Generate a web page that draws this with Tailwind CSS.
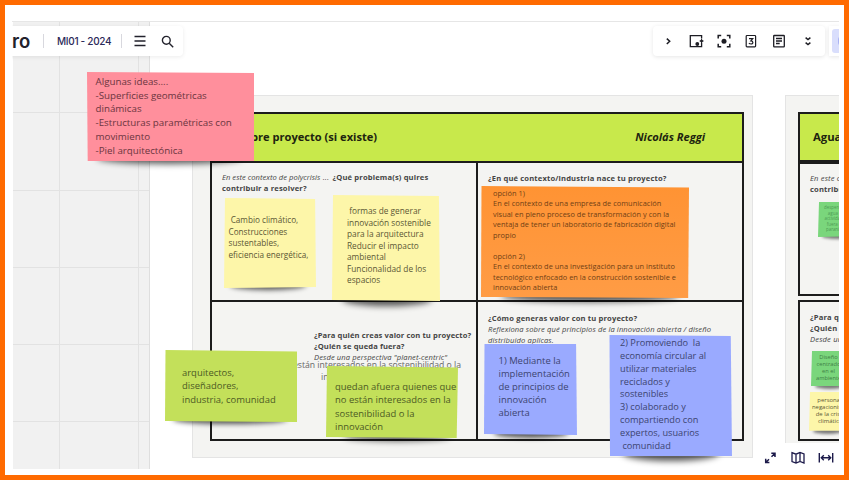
<!DOCTYPE html>
<html lang="es">
<head>
<meta charset="utf-8">
<title>MI01 - 2024</title>
<script src="https://cdn.jsdelivr.net/npm/@tailwindcss/browser@4"></script>
</head>
<body class="bg-[#ff6a00] font-['Open_Sans',sans-serif]">
<main class="relative h-[480px] w-[849px] overflow-hidden border-5 border-[#ff6a00] bg-white">
<div class="absolute -left-[5px] -top-[5px] h-[480px] w-[849px] [clip-path:inset(21px_10px_11px_12px)]">

  <!-- grid panel -->
  <div class="absolute left-[13px] top-[21px] flex h-[448px] w-[137px] border-r border-[#dedede] bg-[#f1f1f1]">
    <div class="w-[47px] border-r border-[#e2e2e2]"></div>
    <div class="w-[79px] border-r border-[#e2e2e2]"></div>
    <div class="absolute inset-x-0 top-[15px] flex flex-col">
      <div class="h-[77.3px] border-b border-[#e2e2e2]"></div>
      <div class="h-[77.3px] border-b border-[#e2e2e2]"></div>
      <div class="h-[77.3px] border-b border-[#e2e2e2]"></div>
      <div class="h-[77.3px] border-b border-[#e2e2e2]"></div>
      <div class="h-[77.3px] border-b border-[#e2e2e2]"></div>
    </div>
  </div>
  <div class="absolute left-[12px] top-[21px] h-px w-[827px] bg-[#e6e6e6]"></div>

  <!-- frame 1 -->
  <section class="absolute left-[192px] top-[95px] h-[363px] w-[561px] border border-[#e4e4e4] bg-[#f4f4f2] pl-[17px] pt-[16px] text-[#444]">
    <div class="grid h-[329px] w-[534px] grid-cols-[266px_1fr] grid-rows-[49px_139px_1fr] border-2 border-[#1c1c1c]">
      <header class="col-span-2 flex items-center justify-between border-b-2 border-[#1c1c1c] bg-[#c8e94b] pl-[26px] pr-[37px] text-[11.1px] font-bold text-[#20240f]">
        <span class="whitespace-pre">Sobre proyecto (si existe)</span><span class="italic">Nicolás Reggi</span>
      </header>
      <div class="border-b-2 border-r-2 border-[#1c1c1c] pl-[10px] pt-[9px] text-[7.6px] leading-[11px] tracking-[0.15px]">
        <p class="whitespace-pre"><i class="tracking-[0.03px]">En este contexto de polycrisis</i> ... <b class="ml-[1.5px]">¿Qué problema(s) quires</b></p>
        <p class="font-bold">contribuir a resolver?</p>
      </div>
      <div class="border-b-2 border-[#1c1c1c] pl-[10px] pt-[10px] text-[7.6px] font-bold leading-[11px] tracking-[0.15px]">¿En qué contexto/industria nace tu proyecto?</div>
      <div class="border-r-2 border-[#1c1c1c] pl-[102px] pt-[28px] text-[7.6px] leading-[11px] tracking-[0.1px]">
        <p class="whitespace-nowrap font-bold">¿Para quién creas valor con tu proyecto?</p>
        <p class="font-bold">¿Quién se queda fuera?</p>
        <p class="italic">Desde una perspectiva "planet-centric"</p>
      </div>
      <div class="pl-[10px] pt-[11px] text-[7.6px] leading-[11px] tracking-[0.1px]">
        <p class="font-bold tracking-[0.15px]">¿Cómo generas valor con tu proyecto?</p>
        <p class="whitespace-nowrap italic">Reflexiona sobre qué principios de la innovación abierta / diseño</p>
        <p class="italic">distribuido aplicas.</p>
      </div>
    </div>
  </section>

  <!-- frame 2 -->
  <section class="absolute left-[785px] top-[95px] h-[363px] w-[561px] border border-[#e4e4e4] bg-[#f4f4f2] pl-[12px] pt-[16px] text-[#444]">
    <div class="flex h-[50px] w-[534px] items-center border-2 border-[#1c1c1c] bg-[#c8e94b] pl-[13px] text-[11.3px] font-bold text-[#20240f]">Agua</div>
    <div class="h-[134px] w-[534px] border-2 border-[#1c1c1c] pl-[10px] pt-[9px] text-[7.6px] leading-[11px] tracking-[0.15px]">
      <p class="italic">En este contexto</p><p class="font-bold">contribuir a</p>
    </div>
    <div class="mt-[4px] h-[141px] w-[534px] border-2 border-[#1c1c1c] pl-[10px] pt-[10px] text-[7.6px] leading-[11px] tracking-[0.15px]">
      <p class="font-bold">¿Para quién</p><p class="font-bold">¿Quién se</p><p class="italic">Desde una</p>
    </div>
  </section>

  <!-- loose text behind the green note -->
  <div class="absolute left-[293px] top-[359px] whitespace-pre text-[8.65px] leading-[12px] text-[#666]"><p>están interesados en la sostenibilidad o la</p><p class="pl-[28px]">innovación</p></div>

  <!-- pink -->
  <article class="absolute left-[87px] top-[72px] h-[89px] w-[167px]">
    <div class="absolute bottom-[-3px] left-[10px] h-[12px] w-[145px] rounded-[50%] bg-black/65 blur-[3px]"></div>
    <div class="absolute inset-0 bg-[#ff8f9c] [clip-path:polygon(0_0,100%_1px,100%_100%,0.7px_100%)]"></div>
    <p class="relative whitespace-pre pl-[8.5px] pt-[3px] text-[9.75px] leading-[13.7px] text-[#6b3540]">Algunas ideas....
-Superficies geométricas
dinámicas
-Estructuras paramétricas con
movimiento
-Piel arquitectónica</p>
  </article>

  <!-- yellow -->
  <article class="absolute left-[224px] top-[198px] h-[90px] w-[92px]">
    <div class="absolute bottom-[-2px] left-[6px] h-[10px] w-[76px] rounded-[50%] bg-black/65 blur-[2.5px]"></div>
    <div class="absolute inset-0 bg-[#fdf6a9] [clip-path:polygon(1px_0,99%_1px,100%_99%,0_100%)]"></div>
    <p class="relative whitespace-pre pl-[4.5px] pt-[16px] text-[8.2px] leading-[11.7px] text-[#5b5635]"> Cambio climático,
Construcciones
sustentables,
eficiencia energética,</p>
  </article>
  <article class="absolute left-[332px] top-[195px] h-[106px] w-[108px]">
    <div class="absolute bottom-[-5px] left-[10px] h-[14px] w-[90px] rounded-[50%] bg-black/65 blur-[3px]"></div>
    <div class="absolute inset-0 bg-[#fdf6a9] [clip-path:polygon(1px_0,99%_1px,100%_100%,0_99%)]"></div>
    <p class="relative whitespace-pre pl-[15px] pt-[10px] text-[8.3px] leading-[11.5px] text-[#5b5635]"> formas de generar
innovación sostenible
para la arquitectura
Reducir el impacto
ambiental
Funcionalidad de los
espacios</p>
  </article>

  <!-- orange -->
  <article class="absolute left-[481px] top-[186px] h-[112px] w-[208px]">
    <div class="absolute bottom-[-4px] left-[20px] h-[12px] w-[178px] rounded-[50%] bg-black/65 blur-[3px]"></div>
    <div class="absolute inset-0 bg-linear-to-b from-[#ff9333] to-[#ff9c45] [clip-path:polygon(0.5px_0,100%_1.5px,99.6%_100%,0_99%)]"></div>
    <p class="relative whitespace-pre pl-[12px] pt-[2px] text-[7.4px] leading-[10.45px] tracking-[0.03px] text-[#703f15]">opción 1)
En el contexto de una empresa de comunicación
visual en pleno proceso de transformación y con la
ventaja de tener un laboratorio de fabricación digital
propio

opción 2)
En el contexto de una investigación para un instituto
tecnológico enfocado en la construcción sostenible e
innovación abierta</p>
  </article>

  <!-- lime -->
  <article class="absolute left-[165px] top-[350px] h-[72px] w-[132px]">
    <div class="absolute bottom-[-2px] left-[8px] h-[9px] w-[114px] rounded-[50%] bg-black/65 blur-[2.5px]"></div>
    <div class="absolute inset-0 bg-[#c3e05a] [clip-path:polygon(0.5px_0,100%_1.5px,100%_100%,0_98.5%)]"></div>
    <p class="relative whitespace-pre pl-[17px] pt-[16px] text-[9.45px] leading-[13.3px] text-[#4c5a24]">arquitectos,
diseñadores,
industria, comunidad</p>
  </article>
  <article class="absolute left-[326px] top-[366px] h-[72px] w-[132px]">
    <div class="absolute bottom-[-3px] left-[18px] h-[10px] w-[106px] rounded-[50%] bg-black/65 blur-[3px]"></div>
    <div class="absolute inset-0 bg-[#c3e05a] [clip-path:polygon(1px_0,100%_1.5px,99%_100%,0_98.5%)]"></div>
    <p class="relative whitespace-pre pl-[9px] pt-[14px] text-[9.45px] leading-[13.3px] text-[#4c5a24]">quedan afuera quienes que
no están interesados en la
sostenibilidad o la
innovación</p>
  </article>

  <!-- blue -->
  <article class="absolute left-[484px] top-[344px] h-[91px] w-[93px]">
    <div class="absolute bottom-[-3px] left-[10px] h-[10px] w-[74px] rounded-[50%] bg-black/65 blur-[2.5px]"></div>
    <div class="absolute inset-0 bg-[#9aaaff] [clip-path:polygon(0.5px_0,99%_0,100%_100%,0_99%)]"></div>
    <p class="relative whitespace-pre pl-[14.5px] pt-[10px] text-[9.45px] leading-[13.1px] text-[#3c4470]">1) Mediante la
implementación
de principios de
innovación
abierta</p>
  </article>
  <article class="absolute left-[609px] top-[335px] h-[121px] w-[123px]">
    <div class="absolute bottom-[-5px] left-[14px] h-[15px] w-[96px] rounded-[50%] bg-black/65 blur-[3px]"></div>
    <div class="absolute inset-0 bg-[#9aaaff] [clip-path:polygon(0.5px_0,99%_1px,100%_100%,1px_100%)]"></div>
    <p class="relative whitespace-pre pl-[11px] pt-[2px] text-[9.2px] leading-[12.85px] text-[#3c4470]">2) Promoviendo  la
economía circular al
utilizar materiales
reciclados y
sostenibles
3) colaborado y
compartiendo con
expertos, usuarios
 comunidad</p>
  </article>

  <!-- small notes, frame 2 -->
  <article class="absolute left-[818px] top-[202px] h-[35px] w-[36px]">
    <div class="absolute bottom-[-2px] left-[4px] h-[6px] w-[30px] rounded-[50%] bg-black/50 blur-[1.5px]"></div>
    <div class="absolute inset-0 bg-[#7ad67c] [clip-path:polygon(1px_0,100%_0,100%_97%,0_100%)]"></div>
    <p class="relative w-[32px] whitespace-pre pl-[4px] pt-[3px] text-center text-[4.4px] leading-[5.6px] text-[#4d9a54]">desperdicio
agua en
actividades
fuera del
paraninfo</p>
  </article>
  <article class="absolute left-[811px] top-[351px] h-[36px] w-[37px]">
    <div class="absolute bottom-[-2px] left-[4px] h-[6px] w-[30px] rounded-[50%] bg-black/50 blur-[1.5px]"></div>
    <div class="absolute inset-0 bg-[#7ad67c] [clip-path:polygon(1px_0,100%_0,100%_97%,0_97%)]"></div>
    <p class="relative w-[30px] whitespace-pre pl-[5px] pt-[3px] text-center text-[5.7px] leading-[7.1px] text-[#3f7f46]">Diseño
centrado
en el
ambiente</p>
  </article>
  <article class="absolute left-[809px] top-[392px] h-[40px] w-[41px]">
    <div class="absolute bottom-[-2px] left-[4px] h-[6px] w-[30px] rounded-[50%] bg-black/50 blur-[1.5px]"></div>
    <div class="absolute inset-0 bg-[#fdf6a9] [clip-path:polygon(1px_0,100%_0,100%_97%,0_97%)]"></div>
    <p class="relative w-[39px] whitespace-pre pl-[3px] pt-[5px] text-center text-[5.9px] leading-[7.1px] text-[#5b5635]">personas
negacionistas
de la crisis
climática</p>
  </article>

  <!-- left toolbar -->
  <nav class="absolute left-[-20px] top-[26px] flex h-[30px] w-[203px] items-center rounded-sm bg-white pl-[32px] text-[#22222c] shadow-[0_1px_4px_rgba(0,0,0,0.08)]">
    <span class="w-[31px] font-['Inter',sans-serif] text-[18.5px] font-semibold leading-[17px]">ro</span>
    <span class="h-[14px] w-px bg-[#d8d8de]"></span>
    <span class="ml-[13px] w-[64px] whitespace-nowrap font-['Inter',sans-serif] text-[10px] font-medium tracking-[-0.3px] text-[#2b2957]">MI01 - 2024</span>
    <span class="h-[14px] w-px bg-[#d8d8de]"></span>
    <svg class="ml-[12px] h-[12px] w-[12px]" viewBox="0 0 12 12" fill="none" stroke="currentColor" stroke-width="1.3"><path d="M.5 1.5h11M.5 6h11M.5 10.500h11"/></svg>
    <svg class="ml-[15px] h-[13px] w-[13px]" viewBox="0 0 13 13" fill="none" stroke="currentColor" stroke-width="1.4"><circle cx="5.3" cy="5.3" r="3.9"/><path d="M8.200 8.200l4 4"/></svg>
  </nav>

  <!-- right toolbar -->
  <nav class="absolute left-[653px] top-[26px] flex h-[30px] w-[172px] items-center rounded-sm bg-white pl-[8px] text-[#1d1d24] shadow-[0_1px_4px_rgba(0,0,0,0.1)]">
    <svg class="h-[14px] w-[14px]" viewBox="0 0 14 14" fill="none" stroke="currentColor" stroke-width="1.500"><path d="M5.800 4.600l2.900 2.700-2.900 2.700"/></svg>
    <svg class="ml-[14px] h-[14px] w-[15px]" viewBox="0 0 15 14" fill="none" stroke="currentColor" stroke-width="1.300"><path d="M12.600 4.500V1.600H1.300v11.100h11.300V9"/><path fill="currentColor" stroke="none" d="M12.600 4.200l.8 1.900 1.600.9-1.600.9-.8 2-.8-2-1.600-.9 1.600-.9z"/><circle cx="8.300" cy="10" r="1.900" fill="currentColor" stroke="none"/></svg>
    <svg class="ml-[13px] h-[14px] w-[14px]" viewBox="0 0 14 14" fill="none" stroke="currentColor" stroke-width="1.500"><path d="M1.200 4.500V1.400h3M9.800 1.400h3v3.100M12.800 9.800v3h-3M4.200 12.800h-3v-3"/><circle cx="7" cy="7.200" r="2.500" fill="currentColor" stroke="none"/></svg>
    <svg class="ml-[14px] h-[14px] w-[12px]" viewBox="0 0 12 14" fill="none" stroke="currentColor" stroke-width="1.200"><rect x="1.200" y="1.500" width="9.400" height="11.300" rx=".8"/><path d="M4 4.700h3.700L5.900 6.800c2.600 0 2.600 3.200.2 3.200-1 0-1.700-.3-2.200-.9"/></svg>
    <svg class="ml-[15px] h-[14px] w-[14px]" viewBox="0 0 14 14" fill="none" stroke="currentColor" stroke-width="1.300"><rect x="1.700" y="1.500" width="10.600" height="11.300" rx=".6"/><path d="M4 4.500h6M4 7h6M4 9.500h3.700"/></svg>
    <svg class="ml-[15px] h-[14px] w-[14px]" viewBox="0 0 14 14" fill="none" stroke="currentColor" stroke-width="1.400"><path d="M4.600 3.600l2.400 2 2.400-2M4.600 8.600l2.400 2 2.400-2"/></svg>
  </nav>
  <div class="absolute left-[829px] top-[26px] h-[30px] w-[40px] bg-white pl-[3px] pt-[3px] shadow-[0_1px_4px_rgba(0,0,0,0.1)]"><div class="h-[24px] w-[30px] rounded-[3px] bg-[#d9defc] pl-[6px] pt-[7px]"><div class="h-[10px] w-[10px] rounded-sm bg-[#a9b2f4]"></div></div></div>

  <!-- zoom toolbar -->
  <nav class="absolute left-[755px] top-[443px] flex h-[40px] w-[100px] items-start bg-white pl-[8px] pt-[7px] text-[#1c1a4a]">
    <svg class="h-[15px] w-[14px]" viewBox="0 0 14 15" fill="none" stroke="currentColor" stroke-width="1.500"><path d="M8.300 3.300h3.700V7M12 3.300L8.500 6.800M2.700 8.800v3.700h3.700M2.700 12.500l3.300-3.300"/></svg>
    <svg class="ml-[14px] h-[15px] w-[14px]" viewBox="0 0 14 15" fill="none" stroke="currentColor" stroke-width="1.300"><path d="M1 2.700l4 1.500 4-1.700 4 1.500v9l-4-1.500-4 1.500-4-1.500zM5 4.200V13M9 2.500v9"/></svg>
    <svg class="ml-[13px] h-[15px] w-[16px]" viewBox="0 0 16 15" fill="none" stroke="currentColor" stroke-width="1.400"><path d="M1.300 3v9.500M14.700 3v9.500M3.500 7.700h9M5.800 5.200L3.300 7.700l2.500 2.500M10.200 5.200l2.500 2.500-2.500 2.500"/></svg>
  </nav>
</div>
</main>
</body>
</html>
